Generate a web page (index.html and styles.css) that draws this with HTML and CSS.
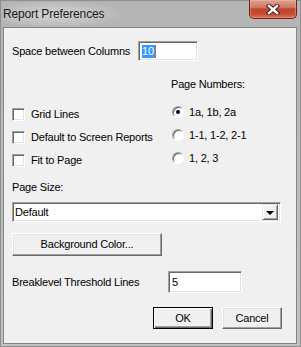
FILE: index.html
```html
<!DOCTYPE html>
<html lang="en">
<head>
  <meta charset="UTF-8">
  <title>Report Preferences</title>
  <link rel="stylesheet" href="styles.css">
</head>
<body>
  <div class="window">
    <div class="titlebar">
      <span class="title">Report Preferences</span>
      <div class="close">
        <svg width="14" height="11" viewBox="0 0 14 11">
          <path d="M3 2 L11 9 M11 2 L3 9" stroke="#4b1d15" stroke-width="4.4" stroke-linecap="square"/>
          <path d="M3 2 L11 9 M11 2 L3 9" stroke="#fff" stroke-width="2.4" stroke-linecap="square"/>
        </svg>
      </div>
    </div>

    <div class="client">
      <div class="row spacing">
        <span class="label wide">Space between Columns</span>
        <div class="field spacing-field"><span class="sel">10</span><span class="caret"></span></div>
      </div>

      <div class="options">
        <div class="checks">
          <div class="check"><span class="box"></span>Grid Lines</div>
          <div class="check"><span class="box"></span>Default to Screen Reports</div>
          <div class="check"><span class="box"></span>Fit to Page</div>
        </div>
        <div class="radios">
          <div class="heading">Page Numbers:</div>
          <div class="radio on"><span class="circle"></span>1a, 1b, 2a</div>
          <div class="radio"><span class="circle"></span>1-1, 1-2, 2-1</div>
          <div class="radio"><span class="circle"></span>1, 2, 3</div>
        </div>
      </div>

      <div class="label page-size">Page Size:</div>
      <div class="field select">
        <span class="value">Default</span>
        <span class="arrow"><span class="tri"></span></span>
      </div>

      <div class="btn bg-btn">Background Color...</div>

      <div class="row breaklevel">
        <span class="label wider">Breaklevel Threshold Lines</span>
        <div class="field break-field">5</div>
      </div>

      <div class="actions">
        <div class="btn default">OK</div>
        <div class="btn">Cancel</div>
      </div>
    </div>
  </div>
</body>
</html>
```

FILE: styles.css
```css
body {
  margin: 0;
  font-family: "Liberation Sans", Arial, sans-serif;
  color: #000;
}
.window {
  width: 301px;
  height: 347px;
  box-sizing: border-box;
  display: flex;
  flex-direction: column;
  padding: 0 4px 3px 3px;
  background: linear-gradient(#b4b4b4, #c2c2c2);
  box-shadow: inset 0 0 0 1px #8e8e8e;
}
.titlebar {
  height: 27px;
  display: flex;
  justify-content: space-between;
  align-items: flex-start;
  background: radial-gradient(ellipse 70px 14px at 52px 14px, rgba(255, 255, 255, 0.45), rgba(255, 255, 255, 0));
}
.title {
  font-size: 12px;
  letter-spacing: -0.15px;
  line-height: 14px;
  margin-top: 7px;
  color: #1a1a1a;
}
.close {
  width: 48px;
  height: 19px;
  box-sizing: border-box;
  border: 1px solid #6a2519;
  border-top: none;
  border-radius: 0 0 5px 5px;
  background: linear-gradient(#dca394 0%, #d27a66 40%, #c2442e 50%, #c64b33 75%, #d8704f 100%);
  box-shadow: inset 0 0 0 1px rgba(255, 200, 180, 0.35);
  display: flex;
  align-items: center;
  justify-content: center;
}
.client {
  flex: 1;
  background: #f0f0f0;
  border: 1px solid #858585;
  display: flex;
  flex-direction: column;
  padding-left: 8px;
  font-size: 11px;
  letter-spacing: -0.2px;
  line-height: 13px;
}
.row {
  display: flex;
  align-items: center;
}
.spacing {
  margin-top: 13px;
}
.label.wide {
  width: 126px;
}
.label.wider {
  width: 156px;
}
.field {
  box-sizing: border-box;
  background: #fff;
  border: 1px solid;
  border-color: #a0a0a0 #fff #fff #a0a0a0;
  box-shadow: inset 1px 1px 0 #696969, inset -1px -1px 0 #e3e3e3;
  display: flex;
  align-items: center;
}
.spacing-field {
  width: 60px;
  height: 20px;
  padding-left: 3px;
}
.sel {
  background: #3399ff;
  color: #fff;
  height: 13px;
  padding: 0 1px 0 0;
}
.caret {
  width: 1px;
  height: 13px;
  background: #c66a1e;
}
.options {
  display: flex;
}
.checks {
  width: 159px;
  padding-top: 46px;
  display: flex;
  flex-direction: column;
  gap: 9px;
}
.check {
  height: 14px;
  display: flex;
  align-items: center;
  gap: 6px;
  white-space: nowrap;
}
.box {
  width: 13px;
  height: 13px;
  box-sizing: border-box;
  background: #fff;
  border: 1px solid;
  border-color: #a0a0a0 #fff #fff #a0a0a0;
  box-shadow: inset 1px 1px 0 #696969, inset -1px -1px 0 #e3e3e3;
}
.radios {
  display: flex;
  flex-direction: column;
  gap: 9px;
}
.heading {
  margin-top: 17px;
  margin-bottom: 5px;
}
.radio {
  height: 14px;
  display: flex;
  align-items: center;
  gap: 5px;
  margin-left: 1px;
}
.circle {
  width: 12px;
  height: 12px;
  box-sizing: border-box;
  border-radius: 50%;
  background: #fff;
  border: 1px solid;
  border-color: #a0a0a0 #fff #fff #a0a0a0;
  box-shadow: inset 1px 1px 0 #696969;
  display: flex;
  align-items: center;
  justify-content: center;
}
.radio.on .circle::after {
  content: "";
  width: 4px;
  height: 4px;
  border-radius: 50%;
  background: #000;
}
.page-size {
  margin-top: 14px;
}
.select {
  margin-top: 8px;
  width: 269px;
  height: 20px;
  padding: 0 2px 0 2px;
  justify-content: space-between;
}
.arrow {
  width: 16px;
  height: 16px;
  box-sizing: border-box;
  background: #f0f0f0;
  border: 1px solid;
  border-color: #e3e3e3 #696969 #696969 #e3e3e3;
  box-shadow: inset 1px 1px 0 #fff, inset -1px -1px 0 #a0a0a0;
  display: flex;
  align-items: center;
  justify-content: center;
}
.tri {
  width: 0;
  height: 0;
  border-left: 4px solid transparent;
  border-right: 4px solid transparent;
  border-top: 4px solid #000;
  margin-top: 1px;
}
.btn {
  box-sizing: border-box;
  background: #f0f0f0;
  border: 1px solid;
  border-color: #fff #696969 #696969 #fff;
  box-shadow: inset -1px -1px 0 #a0a0a0, inset 1px 1px 0 #e3e3e3;
  display: flex;
  align-items: center;
  justify-content: center;
  width: 60px;
  height: 22px;
}
.bg-btn {
  margin-top: 11px;
  width: 150px;
  height: 23px;
}
.breaklevel {
  margin-top: 15px;
}
.break-field {
  width: 74px;
  height: 22px;
  padding-left: 3px;
}
.actions {
  margin-top: 14px;
  display: flex;
  justify-content: flex-end;
  gap: 9px;
  padding-right: 14px;
}
.btn.default {
  border: 1px solid #000;
  box-shadow: inset 1px 1px 0 #fff, inset -1px -1px 0 #696969, inset -2px -2px 0 #a0a0a0;
}
```
